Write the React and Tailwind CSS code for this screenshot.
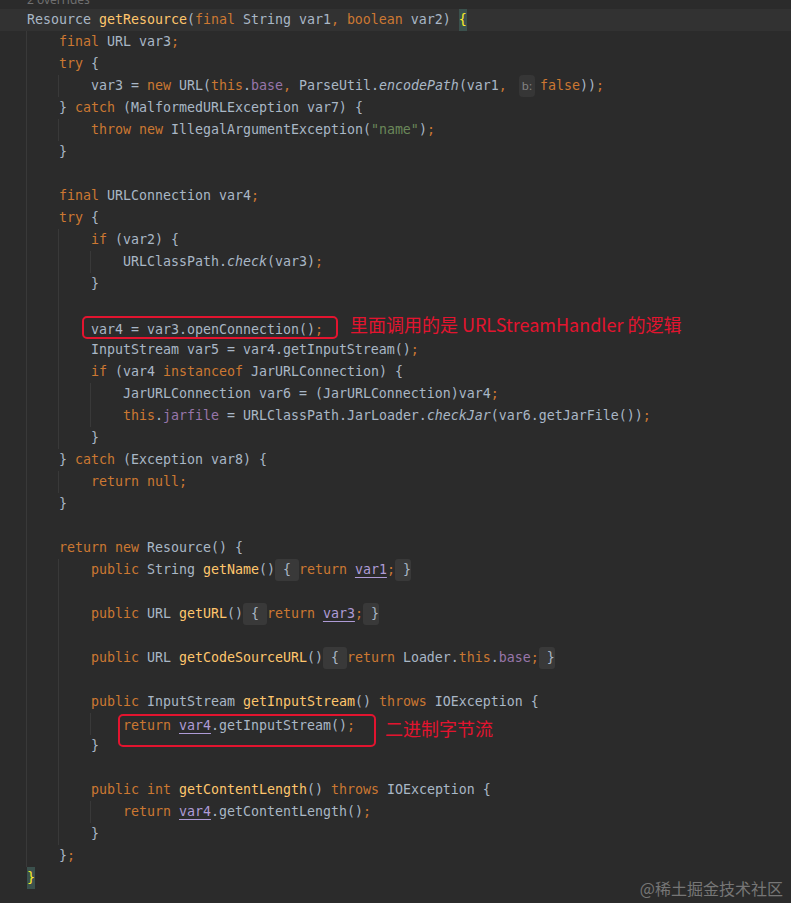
import React from "react";

const K = ({ children }) => <span className="text-[#cc7832]">{children}</span>;
const F = ({ children }) => <span className="text-[#ffc66d]">{children}</span>;
const Fd = ({ children }) => <span className="text-[#9876aa]">{children}</span>;
const It = ({ children }) => <span className="italic">{children}</span>;
const S = ({ children }) => <span className="text-[#6a8759]">{children}</span>;
const Cap = ({ children }) => (
  <span className="text-[#ae9bd6] underline decoration-[#ae9bd6] underline-offset-[3px]">{children}</span>
);
const Fold = ({ children }) => (
  <span className="inline-block rounded-[3px] bg-[#393939] leading-[22px] text-[#a9b7c6]">{children}</span>
);
const MB = ({ children }) => (
  <span className="inline-block bg-[#3b514d] leading-[22px] text-[#ffef28]">{children}</span>
);
const Hint = ({ children }) => (
  <span className="ml-[4px] mr-[5px] inline-block rounded-[4px] bg-[#363636] px-[3px] font-['Noto_Sans',sans-serif] text-[11.5px] leading-[22px] text-[#858585]">
    {children}
  </span>
);

const Line = ({ indent = 0, className = "", children }) => (
  <div className={"flex h-[22px] items-center pl-[26px] " + className}>
    {Array.from({ length: indent }).map((_, i) => (
      <span key={i} className="h-full w-[32px] shrink-0 border-l border-[#393939]" />
    ))}
    <span className="w-px shrink-0" />
    <span className="whitespace-pre leading-[22px]">{children}</span>
  </div>
);

export default function App() {
  return (
    <div className="relative h-[903px] w-[791px] overflow-hidden bg-[#2b2b2b] font-['DejaVu_Sans_Mono',monospace] text-[13.29px] text-[#a9b7c6]">
      <div className="h-[9px] overflow-hidden pl-[27px]">
        <div className="-mt-[8px] font-['Noto_Sans',sans-serif] text-[12px] leading-[16px] text-[#6f6f6f]">2 overrides</div>
      </div>

      <Line className="bg-[#323232]">
        Resource <F>getResource</F>(<K>final</K> String var1<K>,</K> <K>boolean</K> var2) <MB>{"{"}</MB>
      </Line>
      <Line indent={1}>
        <K>final</K> URL var3<K>;</K>
      </Line>
      <Line indent={1}>
        <K>try</K> {"{"}
      </Line>
      <Line indent={2}>
        var3 = <K>new</K> URL(<K>this</K>.<Fd>base</Fd>
        <K>,</K> ParseUtil.<It>encodePath</It>(var1<K>,</K> <Hint>b:</Hint>
        <K>false</K>))<K>;</K>
      </Line>
      <Line indent={1}>
        {"} "}
        <K>catch</K> (MalformedURLException var7) {"{"}
      </Line>
      <Line indent={2}>
        <K>throw</K> <K>new</K> IllegalArgumentException(<S>"name"</S>)<K>;</K>
      </Line>
      <Line indent={1}>{"}"}</Line>
      <Line indent={1} />
      <Line indent={1}>
        <K>final</K> URLConnection var4<K>;</K>
      </Line>
      <Line indent={1}>
        <K>try</K> {"{"}
      </Line>
      <Line indent={2}>
        <K>if</K> (var2) {"{"}
      </Line>
      <Line indent={3}>
        URLClassPath.<It>check</It>(var3)<K>;</K>
      </Line>
      <Line indent={2}>{"}"}</Line>
      <Line indent={2} />
      <Line indent={2}>
        <span className="relative inline-block">
          var4 = var3.openConnection()<K>;</K>
          <span className="absolute -left-[9px] -right-[15px] -top-[3px] bottom-[2px] rounded-[5px] border-2 border-[#e3142f]" />
        </span>
        <span className="ml-[27px] inline-block -translate-y-[2px] font-['Noto_Sans_CJK_SC',sans-serif] text-[18px] leading-[22px] text-[#e3142f]">
          里面调用的是 URLStreamHandler 的逻辑
        </span>
      </Line>
      <Line indent={2}>
        InputStream var5 = var4.getInputStream()<K>;</K>
      </Line>
      <Line indent={2}>
        <K>if</K> (var4 <K>instanceof</K> JarURLConnection) {"{"}
      </Line>
      <Line indent={3}>
        JarURLConnection var6 = (JarURLConnection)var4<K>;</K>
      </Line>
      <Line indent={3}>
        <K>this</K>.<Fd>jarfile</Fd> = URLClassPath.JarLoader.<It>checkJar</It>(var6.getJarFile())<K>;</K>
      </Line>
      <Line indent={2}>{"}"}</Line>
      <Line indent={1}>
        {"} "}
        <K>catch</K> (Exception var8) {"{"}
      </Line>
      <Line indent={2}>
        <K>return</K> <K>null</K>
        <K>;</K>
      </Line>
      <Line indent={1}>{"}"}</Line>
      <Line indent={1} />
      <Line indent={1}>
        <K>return</K> <K>new</K> Resource() {"{"}
      </Line>
      <Line indent={2}>
        <K>public</K> String <F>getName</F>()<Fold>{" { "}</Fold>
        <K>return</K> <Cap>var1</Cap>
        <K>;</K>
        <Fold>{" }"}</Fold>
      </Line>
      <Line indent={2} />
      <Line indent={2}>
        <K>public</K> URL <F>getURL</F>()<Fold>{" { "}</Fold>
        <K>return</K> <Cap>var3</Cap>
        <K>;</K>
        <Fold>{" }"}</Fold>
      </Line>
      <Line indent={2} />
      <Line indent={2}>
        <K>public</K> URL <F>getCodeSourceURL</F>()<Fold>{" { "}</Fold>
        <K>return</K> Loader.<K>this</K>.<Fd>base</Fd>
        <K>;</K>
        <Fold>{" }"}</Fold>
      </Line>
      <Line indent={2} />
      <Line indent={2}>
        <K>public</K> InputStream <F>getInputStream</F>() <K>throws</K> IOException {"{"}
      </Line>
      <Line indent={3}>
        <span className="relative inline-block">
          <K>return</K> <Cap>var4</Cap>.getInputStream()<K>;</K>
          <span className="absolute -bottom-[10px] -left-[5px] -right-[21px] -top-[1px] rounded-[5px] border-2 border-[#e3142f]" />
        </span>
        <span className="ml-[30px] inline-block translate-y-[6px] font-['Noto_Sans_CJK_SC',sans-serif] text-[18px] leading-[22px] text-[#e3142f]">
          二进制字节流
        </span>
      </Line>
      <Line indent={2}>{"}"}</Line>
      <Line indent={2} />
      <Line indent={2}>
        <K>public</K> <K>int</K> <F>getContentLength</F>() <K>throws</K> IOException {"{"}
      </Line>
      <Line indent={3}>
        <K>return</K> <Cap>var4</Cap>.getContentLength()<K>;</K>
      </Line>
      <Line indent={2}>{"}"}</Line>
      <Line indent={1}>
        {"}"}
        <K>;</K>
      </Line>
      <Line>
        <MB>{"}"}</MB>
      </Line>

      <div className="absolute bottom-[4px] right-[8px] font-['Noto_Sans_CJK_SC',sans-serif] text-[16px] leading-[22px] text-[#767676]">
        @稀土掘金技术社区
      </div>
    </div>
  );
}
